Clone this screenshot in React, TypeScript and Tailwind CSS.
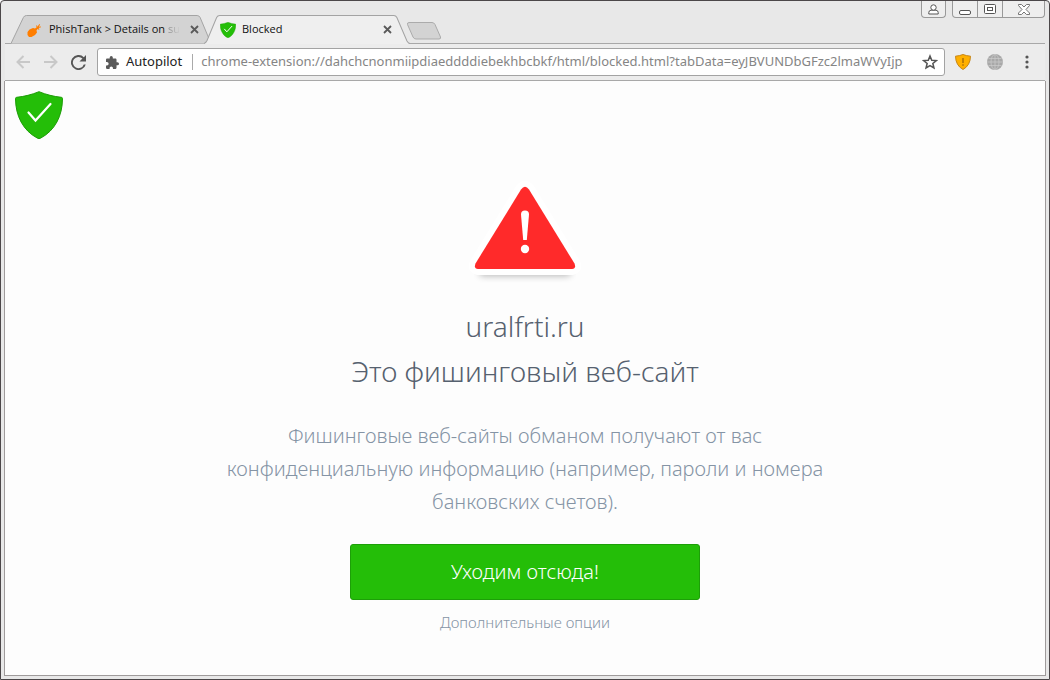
import type { ReactNode } from "react";

function Shield({ className, tick = 2.2 }: { className: string; tick?: number }) {
  return (
    <svg viewBox="0 0 48 48" className={className} aria-hidden="true">
      <path
        d="M24 .7C17 3.600 9 5.600 1.700 6.300C.9 6.400.5 6.800.5 7.500C.6 25 8 39.500 22.500 47.200Q24 47.900 25.500 47.200C40 39.500 47.400 25 47.500 7.500C47.500 6.800 47.100 6.400 46.300 6.300C39 5.600 31 3.600 24 .7Z"
        fill="#24be08"
        stroke="#1b9c05"
      />
      <path d="M13.500 21.500L20.500 29.500L35.500 13" fill="none" stroke="#fff" strokeWidth={tick} strokeLinecap="round" />
    </svg>
  );
}

function CloseGlyph() {
  return (
    <svg viewBox="0 0 9 9" className="size-[9px]" aria-hidden="true">
      <path d="M1 1L8 8M8 1L1 8" stroke="#5a5a5a" strokeWidth="1.8" />
    </svg>
  );
}

function Tab({ active, icon, title }: { active?: boolean; icon: ReactNode; title: ReactNode }) {
  return (
    <div
      className={`relative flex h-[29px] items-center pl-4 ${active ? "z-10 -ml-[9px] w-[206px]" : "w-[202px]"}`}
    >
      <svg viewBox="0 0 204 29" preserveAspectRatio="none" className="absolute inset-0 size-full" aria-hidden="true">
        <path
          d={
            active
              ? "M0 29Q2 28 3 26L12.500 2.500Q13.500.5 15.500.5H188Q190 .5 191 2.500L201 26.500Q202 28.500 204 29Z"
              : "M0 28.500L12.500 2.500Q13.500.5 15.500.5H188Q190 .5 191 2.500L202 28.500"
          }
          fill={active ? "#efefef" : "#d3d3d3"}
        />
        <path
          d={
            active
              ? "M0 28.500Q2 27.500 3 25.500L12.500 2.500Q13.500.5 15.500.5H188Q190 .5 191 2.500L201 26Q202 28 204 28.500"
              : "M0 28.500L12.500 2.500Q13.500.5 15.500.5H188Q190 .5 191 2.500L202 28.500"
          }
          fill="none"
          stroke="#a3a3a3"
        />
      </svg>
      <span className="relative mr-1.5 flex size-4 items-center justify-center">{icon}</span>
      <span className="relative w-[131px] font-['Open_Sans'] text-[11px] whitespace-nowrap text-[#111]">
        {title}
      </span>
      <button type="button" aria-label="Close tab" className="relative ml-1.5 flex size-4 items-center justify-center">
        <CloseGlyph />
      </button>
    </div>
  );
}

function WindowControls() {
  return (
    <div className="absolute top-0 right-px flex gap-1.5 text-[#555]">
      <button
        type="button"
        aria-label="Profile"
        className="flex h-[17px] w-[25px] items-center justify-center rounded-b border border-t-0 border-[#999] bg-[#eee]"
      >
        <svg viewBox="0 0 11 11" className="size-[11px]" fill="#fff" stroke="#555" aria-hidden="true">
          <path d="M.8 10V8.500Q.8 6.500 3 6.200H8Q10.200 6.500 10.200 8.500V10Z" />
          <circle cx="5.500" cy="3.500" r="2.700" />
        </svg>
      </button>
      <div className="flex h-[17px] divide-x divide-[#999] rounded-b border border-t-0 border-[#999] bg-[#eee]">
        <button type="button" aria-label="Minimize" className="flex w-[25px] items-center justify-center">
          <svg viewBox="0 0 13 13" className="size-[13px]" aria-hidden="true">
            <rect x=".5" y="7.500" width="11" height="4" rx="1.500" fill="#fff" stroke="#555" />
          </svg>
        </button>
        <button type="button" aria-label="Maximize" className="flex w-[25px] items-center justify-center">
          <svg viewBox="0 0 13 11" className="h-[11px] w-[13px]" fill="#fff" stroke="#555" aria-hidden="true">
            <rect x=".5" y=".5" width="11" height="9" rx="1" />
            <rect x="3.500" y="3.500" width="5" height="3" />
          </svg>
        </button>
        <button type="button" aria-label="Close window" className="flex w-[41px] items-center justify-center">
          <svg viewBox="0 0 12 11" className="h-[11px] w-3" aria-hidden="true">
            <path
              d="M.5.5H3.500L6 3L8.500.5H11.500V1.500L8 5.500L11.500 9V10.500H8.500L6 8L3.500 10.500H.5V9L4 5.500L.5 1.500Z"
              fill="#fff"
              stroke="#666"
              strokeWidth=".9"
            />
          </svg>
        </button>
      </div>
    </div>
  );
}

function Arrow({ forward }: { forward?: boolean }) {
  return (
    <svg viewBox="0 0 14 14" className="size-3.5" fill="none" stroke="#c8c8c8" strokeWidth="2" aria-hidden="true">
      <path d={forward ? "M0 7H12M6.500 1L12.500 7L6.500 13" : "M14 7H2M7.500 1L1.500 7L7.500 13"} />
    </svg>
  );
}

function Toolbar() {
  return (
    <div className="mx-px flex h-[38px] items-center border-t border-b border-[#a8a8a8] bg-[#ececec] pl-[11px]">
      <button type="button" aria-label="Back">
        <Arrow />
      </button>
      <button type="button" aria-label="Forward" className="ml-3.5">
        <Arrow forward />
      </button>
      <button type="button" aria-label="Reload" className="ml-[13px]">
        <svg viewBox="4 4 16 16" className="size-[15px]" fill="#555" aria-hidden="true">
          <path d="M17.650 6.350A8 8 0 1 0 19.730 14H17.650A6 6 0 1 1 16.220 7.780L13 11H20V4Z" />
        </svg>
      </button>
      <div className="ml-[11px] flex h-7 min-w-0 flex-1 items-center rounded-[3px] border border-[#a3a3a3] bg-white pr-1.5 pl-2 font-['Noto_Sans'] text-[13px]">
        <svg viewBox="2 1 21 21" className="size-[13px] shrink-0" fill="#5a5a5a" aria-hidden="true">
          <path d="M20.500 11H19V7c0-1.100-.9-2-2-2h-4V3.500a2.500 2.500 0 0 0-5 0V5H4c-1.100 0-2 .9-2 2v3.800h1.500c1.500 0 2.700 1.200 2.700 2.700S5 16.200 3.500 16.200H2V20c0 1.100.9 2 2 2h3.800v-1.500c0-1.500 1.200-2.700 2.700-2.700s2.700 1.200 2.700 2.700V22H17c1.100 0 2-.9 2-2v-4h1.500a2.500 2.500 0 0 0 0-5z" />
        </svg>
        <label htmlFor="address" className="ml-[7px] text-[#222]">
          Autopilot
        </label>
        <span className="mr-2 ml-2.5 h-4 w-px shrink-0 bg-[#aaa]" />
        <input
          id="address"
          type="text"
          readOnly
          value="chrome-extension://dahchcnonmiipdiaeddddiebekhbcbkf/html/blocked.html?tabData=eyJBVUNDbGFzc2lmaWVyIjp"
          className="min-w-0 flex-1 bg-transparent text-[#858585] outline-none"
        />
        <button type="button" aria-label="Bookmark this page" className="ml-1.5 shrink-0">
          <svg viewBox="0 0 24 24" className="size-4" fill="none" stroke="#555" strokeWidth="2.300" aria-hidden="true">
            <path d="M12 3L14.600 9.300L21.500 9.900L16.300 14.300L17.900 21L12 17.400L6.100 21L7.700 14.300L2.500 9.900L9.400 9.300Z" />
          </svg>
        </button>
      </div>
      <button type="button" aria-label="Security extension" className="ml-2.5">
        <svg viewBox="0 0 16 16" className="size-4" aria-hidden="true">
          <path d="M8 .5Q4.500 1.900.5 2.200Q.7 11.500 8 15.500Q15.300 11.500 15.500 2.200Q11.500 1.900 8 .5Z" fill="#ffb000" stroke="#c78618" />
          <path d="M8 4V9M8 10.300V11.700" stroke="#95600c" strokeWidth="1.200" />
        </svg>
      </button>
      <button type="button" aria-label="Web extension" className="ml-4">
        <svg viewBox="0 0 16 16" className="size-4" fill="none" stroke="#c9c9c9" strokeWidth=".8" aria-hidden="true">
          <circle cx="8" cy="8" r="8" fill="#a8a8a8" stroke="none" />
          <ellipse cx="8" cy="8" rx="4" ry="7.500" />
          <path d="M8 0V16M0 8H16M1.500 4.500H14.500M1.500 11.500H14.500" />
        </svg>
      </button>
      <button type="button" aria-label="Menu" className="mr-4 ml-[22px]">
        <svg viewBox="0 0 4 14" className="h-3.5 w-1" fill="#555" aria-hidden="true">
          <circle cx="2" cy="2" r="1.600" />
          <circle cx="2" cy="7" r="1.600" />
          <circle cx="2" cy="12" r="1.600" />
        </svg>
      </button>
    </div>
  );
}

function WarningSign() {
  const outline = "M56 8.500Q60 3 64 8.500L109.500 82.500Q111.500 87.500 107 88H13Q8.500 87.500 10.500 82.500Z";
  return (
    <svg viewBox="0 0 120 105" className="h-[105px] w-[120px]" aria-hidden="true">
      <defs>
        <filter id="sign-shadow" x="-10%" y="-10%" width="120%" height="140%">
          <feGaussianBlur stdDeviation="3.500" />
        </filter>
      </defs>
      <path d="M60 30L102 91H18Z" stroke="#000" strokeWidth="8" strokeLinejoin="round" opacity=".28" filter="url(#sign-shadow)" />
      <path d={outline} fill="#fff" stroke="#fff" strokeWidth="12" strokeLinejoin="round" />
      <path d={outline} fill="#ff2a2a" />
      <path d="M56 33.500A4 4 0 0 1 64 33.500L61.800 59H58.200Z" fill="#fff" />
      <circle cx="60" cy="68" r="4.200" fill="#fff" />
    </svg>
  );
}

export default function App() {
  return (
    <div className="flex min-h-screen flex-col rounded-t border border-[#4b4749] bg-[#e8e8e8] px-[3px] pb-[3px]">
      <header className="relative">
        <nav aria-label="Tabs" className="-mb-px flex items-start pt-3.5 pl-[7px]">
          <Tab
            icon={
              <svg viewBox="0 0 16 16" className="size-4" fill="#ff7e00" aria-hidden="true">
                <path d="M.5 10L2.500 7.500L6 6L8 6.500L9.500 5.500L9.200 3.500L10 3.300L10.500 4.800L12.300 2L13 2.500L12 4.800L14 4.500V5.300L11.500 6L12.500 7.300L11.800 7.800L10.500 7L9.500 8.500L10 10.500L8 13L4.500 15H2L.5 13Z" />
              </svg>
            }
            title={
              <>
                PhishTank &gt; Details on{" "}
                <span className="bg-linear-to-r from-[#888] to-[#d3d3d3] bg-clip-text text-transparent">su</span>
              </>
            }
          />
          <Tab active icon={<Shield className="size-4" tick={3} />} title="Blocked" />
          <button type="button" aria-label="New tab" className="-ml-1 pt-[7px]">
            <svg viewBox="0 0 36 18" className="h-[18px] w-9" aria-hidden="true">
              <path d="M3 .5H26Q28 .5 29 2.500L34.500 15Q35 17 33 17H10Q8 17 7 15L1.500 2.500Q1 .5 3 .5Z" fill="#d3d3d3" stroke="#ababab" />
            </svg>
          </button>
        </nav>
        <Toolbar />
        <WindowControls />
      </header>

      <main className="flex flex-1 flex-col border-x border-b border-[#9f9b9b] bg-[#fdfdfd] px-2.5 pt-2.5 font-['Noto_Sans'] font-light text-[#56616f]">
        <Shield className="size-12" />
        <section className="flex flex-col items-center pt-[42px] text-center">
          <WarningSign />
          <h1 className="mt-[18px] text-[28px] leading-[45px]">
            uralfrti.ru
            <br />
            Это фишинговый веб-сайт
          </h1>
          <p className="mt-[25px] max-w-[620px] text-[20px] leading-[33px] text-[#8594a5]">
            Фишинговые веб-сайты обманом получают от вас конфиденциальную информацию (например, пароли и номера
            банковских счетов).
          </p>
          <button
            type="button"
            className="mt-[26px] h-14 w-full max-w-[350px] rounded-[3px] border border-[#1d9f08] bg-[#24be08] text-[20px] text-white"
          >
            Уходим отсюда!
          </button>
          <a href="#options" className="mt-2.5 text-[15px] leading-6 text-[#8594a5]">
            Дополнительные опции
          </a>
        </section>
      </main>
    </div>
  );
}
